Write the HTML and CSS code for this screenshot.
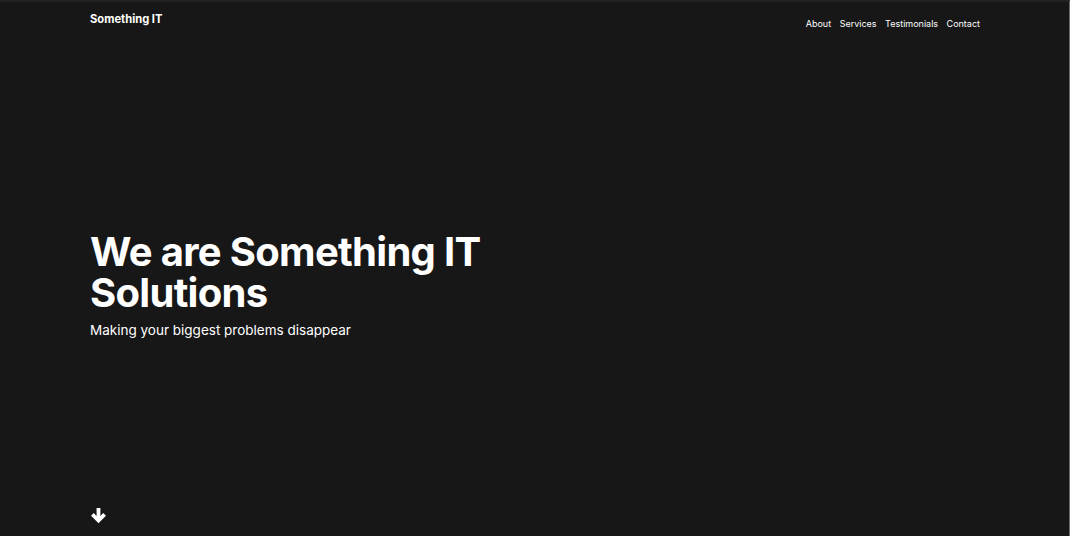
FILE: index.html
```html
<!DOCTYPE html>
<html lang="en">
<head>
<meta charset="utf-8">
<title>Something IT</title>
<link rel="stylesheet" href="styles.css">
</head>
<body>
<div class="page">
  <header class="topbar">
    <div class="brand">Something IT</div>
    <nav class="nav">
      <a href="#">About</a>
      <a href="#">Services</a>
      <a href="#">Testimonials</a>
      <a href="#">Contact</a>
    </nav>
  </header>
  <main class="hero">
    <h1 class="title"><span class="line">We are Something IT</span><span class="line">Solutions</span></h1>
    <p class="subtitle">Making your biggest problems disappear</p>
  </main>
  <div class="scroll">
    <svg width="17" height="17" viewBox="0 0 16 16" aria-hidden="true"><path d="M6.2 1h3.6v7.4l2.7-2.7 2.5 2.5L8 15.2 1 8.2l2.5-2.5 2.7 2.7z" fill="#fff"/></svg>
  </div>
</div>
</body>
</html>
```
FILE: styles.css
```css
html, body {
  margin: 0;
  padding: 0;
  background: #ffffff;
}
body {
  font-family: Inter, "Noto Sans", sans-serif;
  color: #ffffff;
}
.page {
  width: 1070px;
  height: 536px;
  background: #171717;
  border-top: 2px solid #222222;
  border-right: 1px solid #6b6b6b;
  box-sizing: border-box;
  padding: 0 90px;
  display: flex;
  flex-direction: column;
}
.topbar {
  display: flex;
  justify-content: space-between;
  align-items: flex-start;
  padding-top: 10px;
}
.brand {
  font-weight: 700;
  font-size: 11.2px;
  line-height: 14px;
}
.nav {
  display: flex;
  gap: 8.5px;
  padding-top: 6px;
  margin-right: -1px;
}
.nav a {
  color: #ffffff;
  text-decoration: none;
  font-size: 9px;
  line-height: 12px;
}
.hero {
  margin-top: 201px;
}
.title {
  margin: 0;
  font-size: 40px;
  font-weight: 700;
  line-height: 41px;
  letter-spacing: -0.7px;
}
.line {
  display: block;
}
.subtitle {
  margin: 8px 0 0;
  font-size: 13.5px;
  line-height: 18px;
}
.scroll {
  margin-top: auto;
  padding-bottom: 12px;
  line-height: 0;
}
```
